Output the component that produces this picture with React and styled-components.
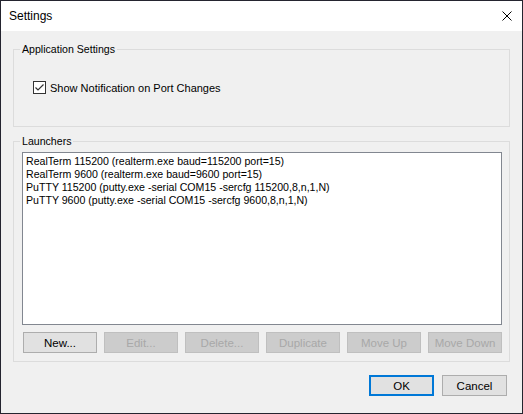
import React from 'react';
import styled, { createGlobalStyle } from 'styled-components';

const GlobalStyle = createGlobalStyle`
  html, body {
    margin: 0;
    padding: 0;
    background: #ffffff;
  }
  * {
    box-sizing: border-box;
  }
`;

const Window = styled.div`
  width: 523px;
  height: 414px;
  border: 1px solid #24242f;
  display: flex;
  flex-direction: column;
  font-family: "Liberation Sans", Arial, sans-serif;
  font-size: 11px;
  color: #000000;
  overflow: hidden;
`;

const TitleBar = styled.div`
  height: 30px;
  flex: none;
  background: #ffffff;
  display: flex;
  align-items: center;
  justify-content: space-between;
  padding: 0 10px 0 8px;
`;

const Title = styled.span`
  font-size: 12px;
`;

const CloseIcon = styled.svg`
  width: 10px;
  height: 10px;
  display: block;
`;

const Body = styled.div`
  flex: 1;
  background: #f0f0f0;
  display: flex;
  flex-direction: column;
  padding: 11px 12px 0;
`;

const Group = styled.fieldset`
  margin: 0;
  margin-top: ${p => p.$top || 0}px;
  border: 1px solid #dcdcdc;
  padding: 0;
  min-width: 0;
`;

const Legend = styled.legend`
  margin-left: 6px;
  padding: 0 2px;
  font-size: 10.6px;
  line-height: 14px;
`;

const GroupContent = styled.div`
  padding: ${p => p.$pad};
`;

const CheckRow = styled.label`
  display: flex;
  align-items: center;
  gap: 4px;
  height: 15px;
`;

const Box = styled.span`
  width: 13px;
  height: 13px;
  border: 1px solid #333333;
  background: #ffffff;
  display: flex;
  align-items: center;
  justify-content: center;
`;

const ListBox = styled.div`
  height: 173px;
  margin-left: 1px;
  border: 1px solid #828790;
  background: #ffffff;
  padding: 2px 3px;
`;

const ListItem = styled.div`
  font-size: 10.6px;
  line-height: 13px;
  white-space: nowrap;
`;

const ButtonRow = styled.div`
  display: flex;
  gap: 7px;
  margin-top: 7px;
  padding-left: 2px;
`;

const Button = styled.button`
  width: ${p => p.$w || 74}px;
  height: 21px;
  padding: 0;
  font-family: "Liberation Sans", Arial, sans-serif;
  font-size: 11.5px;
  background: ${p => (p.disabled ? '#cccccc' : '#e1e1e1')};
  color: ${p => (p.disabled ? '#a8a8a8' : '#000000')};
  border: ${p => (p.$default ? '2px solid #0078d7' : p.disabled ? '1px solid #bfbfbf' : '1px solid #adadad')};
`;

const Footer = styled.div`
  display: flex;
  justify-content: flex-end;
  gap: 8px;
  margin-top: 13px;
  padding-right: 3px;
`;

const launchers = [
  'RealTerm 115200 (realterm.exe baud=115200 port=15)',
  'RealTerm 9600 (realterm.exe baud=9600 port=15)',
  'PuTTY 115200 (putty.exe -serial COM15 -sercfg 115200,8,n,1,N)',
  'PuTTY 9600 (putty.exe -serial COM15 -sercfg 9600,8,n,1,N)'
];

const App = () => (
  <>
    <GlobalStyle />
    <Window>
      <TitleBar>
        <Title>Settings</Title>
        <CloseIcon viewBox="0 0 10 10">
          <path d="M0.5 0.5 L9.5 9.5 M9.5 0.5 L0.5 9.5" stroke="#000" strokeWidth="1" fill="none" />
        </CloseIcon>
      </TitleBar>
      <Body>
        <Group>
          <Legend>Application Settings</Legend>
          <GroupContent $pad="24px 19px 31px">
            <CheckRow>
              <Box>
                <svg width="11" height="11" viewBox="0 0 11 11">
                  <path d="M1.5 5.5 L4 8 L9.5 2.5" stroke="#333" strokeWidth="1.2" fill="none" />
                </svg>
              </Box>
              Show Notification on Port Changes
            </CheckRow>
          </GroupContent>
        </Group>
        <Group $top={7}>
          <Legend>Launchers</Legend>
          <GroupContent $pad="4px 7px 8px 7px">
            <ListBox>
              {launchers.map(l => <ListItem key={l}>{l}</ListItem>)}
            </ListBox>
            <ButtonRow>
              <Button>New...</Button>
              <Button disabled>Edit...</Button>
              <Button disabled>Delete...</Button>
              <Button disabled>Duplicate</Button>
              <Button disabled>Move Up</Button>
              <Button disabled>Move Down</Button>
            </ButtonRow>
          </GroupContent>
        </Group>
        <Footer>
          <Button $w={65} $default>OK</Button>
          <Button $w={65}>Cancel</Button>
        </Footer>
      </Body>
    </Window>
  </>
);

export default App;
